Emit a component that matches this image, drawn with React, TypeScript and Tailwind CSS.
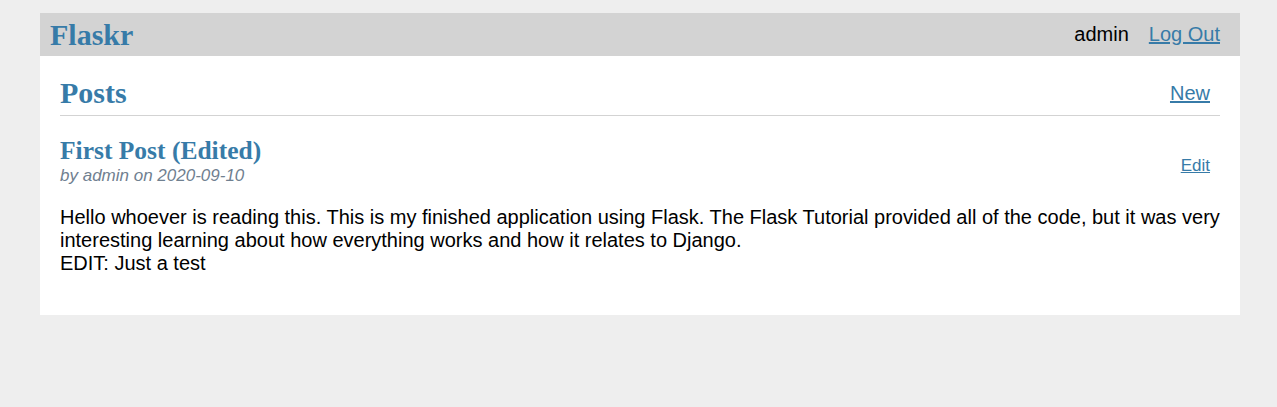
import React from 'react'

export default function App() {
    return (
        <div className="min-h-screen bg-[#eeeeee] pt-[13px] font-['Liberation_Sans',Arial,sans-serif] text-[20px] leading-[normal] text-black">
            <div className="ml-[40px] w-[1200px] bg-white">
                <nav className="flex items-center bg-[#d3d3d3] px-[10px]">
                    <h1 className="flex-auto font-['Liberation_Serif','Times_New_Roman',serif] text-[30px] font-bold text-[#377ba8]">
                        <a href="#">Flaskr</a>
                    </h1>
                    <ul className="flex">
                        <li><span className="block p-[10px]">admin</span></li>
                        <li><a href="#" className="block p-[10px] text-[#377ba8] underline">Log Out</a></li>
                    </ul>
                </nav>
                <section className="px-[20px] pb-[20px]">
                    <header className="flex items-end border-b border-[#d3d3d3]">
                        <h1 className="mt-[20px] mb-[5px] flex-auto font-['Liberation_Serif','Times_New_Roman',serif] text-[30px] font-bold text-[#377ba8]">
                            Posts
                        </h1>
                        <a href="#" className="block p-[10px] text-[#377ba8] underline">New</a>
                    </header>
                    <article>
                        <header className="flex items-end text-[17px]">
                            <div className="flex-auto">
                                <h1 className="mt-[20px] font-['Liberation_Serif','Times_New_Roman',serif] text-[25.5px] font-bold text-[#377ba8]">
                                    First Post (Edited)
                                </h1>
                                <div className="italic text-[#708090]">by admin on 2020-09-10</div>
                            </div>
                            <a href="#" className="block p-[10px] text-[#377ba8] underline">Edit</a>
                        </header>
                        <p className="my-[20px] whitespace-pre-line">
                            {"Hello whoever is reading this. This is my finished application using Flask. The Flask Tutorial provided all of the code, but it was very interesting learning about how everything works and how it relates to Django.\nEDIT: Just a test"}
                        </p>
                    </article>
                </section>
            </div>
        </div>
    )
}
